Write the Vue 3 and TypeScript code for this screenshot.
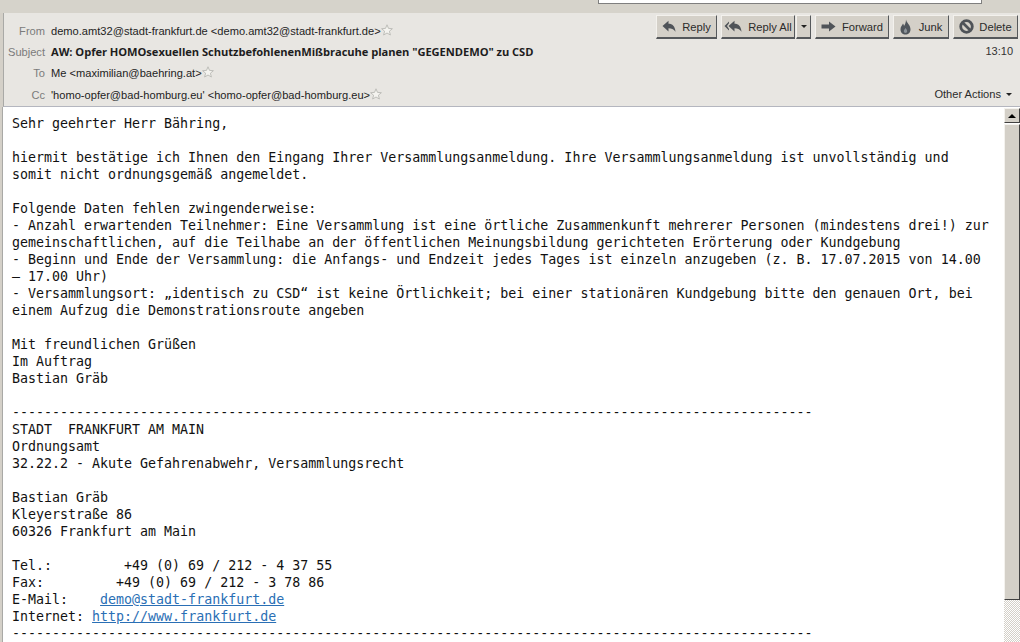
<script setup lang="ts">
interface Field { label: string; text: string; bold?: boolean; star?: boolean }
const fields: Field[] = [
  { label: 'From', text: 'demo.amt32@stadt-frankfurt.de <demo.amt32@stadt-frankfurt.de>', star: true },
  { label: 'Subject', text: 'AW: Opfer HOMOsexuellen SchutzbefohlenenMißbracuhe planen "GEGENDEMO" zu CSD', bold: true },
  { label: 'To', text: 'Me <maximilian@baehring.at>', star: true },
  { label: 'Cc', text: "'homo-opfer@bad-homburg.eu' <homo-opfer@bad-homburg.eu>", star: true }
]
const lines = [
  'Sehr geehrter Herr Bähring,',
  '',
  'hiermit bestätige ich Ihnen den Eingang Ihrer Versammlungsanmeldung. Ihre Versammlungsanmeldung ist unvollständig und',
  'somit nicht ordnungsgemäß angemeldet.',
  '',
  'Folgende Daten fehlen zwingenderweise:',
  '- Anzahl erwartenden Teilnehmer: Eine Versammlung ist eine örtliche Zusammenkunft mehrerer Personen (mindestens drei!) zur',
  'gemeinschaftlichen, auf die Teilhabe an der öffentlichen Meinungsbildung gerichteten Erörterung oder Kundgebung',
  '- Beginn und Ende der Versammlung: die Anfangs- und Endzeit jedes Tages ist einzeln anzugeben (z. B. 17.07.2015 von 14.00',
  '– 17.00 Uhr)',
  '- Versammlungsort: „identisch zu CSD“ ist keine Örtlichkeit; bei einer stationären Kundgebung bitte den genauen Ort, bei',
  'einem Aufzug die Demonstrationsroute angeben',
  '',
  'Mit freundlichen Grüßen',
  'Im Auftrag',
  'Bastian Gräb',
  '',
  '-'.repeat(100),
  'STADT  FRANKFURT AM MAIN',
  'Ordnungsamt',
  '32.22.2 - Akute Gefahrenabwehr, Versammlungsrecht',
  '',
  'Bastian Gräb',
  'Kleyerstraße 86',
  '60326 Frankfurt am Main',
  '',
  'Tel.:         +49 (0) 69 / 212 - 4 37 55',
  'Fax:         +49 (0) 69 / 212 - 3 78 86'
]
const mailPrefix = 'E-Mail:    '
const webPrefix = 'Internet: '
</script>

<template>
  <div class="window">
    <div class="topstrip"><div class="search"></div></div>
    <header class="head">
      <div class="fields">
        <div v-for="f in fields" :key="f.label" class="field">
          <span class="label">{{ f.label }}</span>
          <span :class="['value', { bold: f.bold }]">{{ f.text }}</span>
          <svg v-if="f.star" class="star" width="12" height="12" viewBox="0 0 12 12">
            <path d="M6 .8 7.5 4.4 11.4 4.7 8.4 7.2 9.4 11 6 9 2.6 11 3.6 7.2.6 4.7 4.5 4.4Z" fill="#f4f3ef" stroke="#b9b9b4" stroke-width=".9" />
          </svg>
        </div>
      </div>
      <div class="side">
        <div class="buttons">
          <button class="btn reply">
            <svg width="14" height="13" viewBox="0 0 14 13"><path d="M.5 6 6.500 .8V3.800c4 0 6.500 2.500 7 8C11.500 9 9.500 8.200 6.500 8.200V11.500Z" fill="#4f5358" /></svg>
            <span>Reply</span>
          </button>
          <div class="split">
            <button class="btn replyall">
              <svg width="18" height="13" viewBox="0 0 18 13"><path d="M.5 6 5 1.500V3.200L3 6 5 9V10.500Z" fill="#4f5358" /><path d="M4.500 6 10.500 .8V3.800c4 0 6.500 2.500 7 8C15.500 9 13.500 8.200 10.500 8.200V11.500Z" fill="#4f5358" /></svg>
              <span>Reply All</span>
            </button>
            <button class="btn drop"><span class="caret"></span></button>
          </div>
          <button class="btn forward">
            <svg width="15" height="11" viewBox="0 0 15 11"><path d="M.5 3.500H8V.5L14.500 5.500 8 10.500V7.500H.5Z" fill="#4f5358" /></svg>
            <span>Forward</span>
          </button>
          <button class="btn junk">
            <svg width="11" height="16" viewBox="0 0 11 16"><path d="M6 .5C6.300 3.500 10.500 6 10.500 10.200 10.500 13.500 8.300 15.500 5.500 15.500S.5 13.500.5 10.200C.5 7.800 2 6.500 3 4.500 3.600 5.200 4 6 4 7 5 5.500 6 3.500 6 .5Z" fill="#50565c" /><path d="M5.500 9c.8 1.200 1.700 2 1.700 3.300A1.700 1.700 0 0 1 3.800 12.300C3.800 11 5 10.200 5.500 9Z" fill="#8b9298" /></svg>
            <span>Junk</span>
          </button>
          <button class="btn delete">
            <svg width="15" height="15" viewBox="0 0 15 15"><circle cx="7.500" cy="7.500" r="5.800" fill="none" stroke="#4f5358" stroke-width="2.800" /><path d="M3.500 3.500 11.500 11.500" stroke="#4f5358" stroke-width="2.600" /></svg>
            <span>Delete</span>
          </button>
        </div>
        <div class="time">13:10</div>
        <div class="other">Other Actions<span class="caret other-caret"></span></div>
      </div>
    </header>
    <main class="content">
      <div class="message">
        <div v-for="(l, i) in lines" :key="i" class="line">{{ l }}</div>
        <div class="line">{{ mailPrefix }}<a class="link">demo@stadt-frankfurt.de</a></div>
        <div class="line">{{ webPrefix }}<a class="link">http://www.frankfurt.de</a></div>
        <div class="line">{{ '-'.repeat(100) }}</div>
      </div>
      <div class="scrollbar">
        <div class="arrow"><span class="up"></span></div>
        <div class="thumb"></div>
        <div class="track"></div>
      </div>
    </main>
  </div>
</template>

<style>
html, body { margin: 0; padding: 0; overflow: hidden; }
</style>

<style scoped>
.window {
  width: 1020px;
  height: 642px;
  overflow: hidden;
  display: flex;
  flex-direction: column;
  box-sizing: border-box;
  background: #d4d0c8;
  padding-left: 3px;
  font-family: "Liberation Sans", Arial, sans-serif;
}
.topstrip {
  height: 13px;
  flex: none;
  margin-left: -3px;
  background: #d6d3cb;
  padding-left: 598px;
}
.search {
  width: 382px;
  height: 3px;
  background: #fff;
  border: 1px solid #7f7f7f;
  border-top: 0;
}
.head {
  height: 94px;
  flex: none;
  box-sizing: border-box;
  display: flex;
  justify-content: space-between;
  background: #e8e6e2;
  border-left: 1px solid #a9a9a6;
  border-bottom: 1px solid #b4b6bf;
}
.fields { padding-top: 7px; }
.field {
  height: 21.300px;
  display: flex;
  align-items: center;
  font-size: 11.100px;
  color: #1d1d1d;
  white-space: pre;
}
.label {
  width: 41px;
  margin-right: 6px;
  text-align: right;
  color: #7b7b7b;
  flex: none;
}
.bold {
  font-family: "Open Sans", sans-serif;
  font-weight: 700;
  font-size: 11.150px;
  letter-spacing: -.05px;
}
.star { margin-top: -2px; flex: none; }
.side {
  width: 367px;
  flex: none;
  display: flex;
  flex-direction: column;
  align-items: flex-end;
  padding-right: 2px;
  box-sizing: border-box;
}
.buttons { display: flex; gap: 4px; margin-top: 2px; }
.split { display: flex; gap: 1px; }
.btn {
  height: 24px;
  margin: 0;
  padding: 0;
  box-sizing: border-box;
  display: flex;
  align-items: center;
  justify-content: center;
  gap: 6px;
  background: #d4d0c8;
  color: #2b2b2b;
  font: inherit;
  font-size: 11.200px;
  white-space: nowrap;
  border: 1px solid;
  border-color: #f3f1ed #55585b #55585b #f3f1ed;
  border-bottom-width: 2px;
}
.reply { width: 61px; }
.replyall { width: 74px; }
.drop { width: 15px; }
.forward { width: 74px; }
.junk { width: 56px; gap: 8px; }
.delete { width: 65px; gap: 5px; }
.caret {
  width: 0;
  height: 0;
  border: 3px solid transparent;
  border-top: 3px solid #222;
  border-bottom: 0;
}
.time {
  font-size: 11px;
  color: #333;
  margin-top: 6px;
  margin-right: 5px;
  height: 17px;
}
.other {
  margin-top: 26px;
  margin-right: 6px;
  font-size: 11.100px;
  color: #2b2b2b;
  display: flex;
  align-items: center;
}
.other-caret { margin-left: 5px; }
.content {
  flex: 1;
  min-height: 0;
  display: flex;
  background: #fff;
  border-left: 1px solid #a9a9a6;
  margin-left: -1px;
}
.message {
  flex: 1;
  min-width: 0;
  padding: 8px 0 0 9px;
  font-family: "DejaVu Sans Mono", "Liberation Mono", monospace;
  font-size: 13.300px;
  line-height: 17px;
  color: #111;
  white-space: pre;
  overflow: hidden;
}
.line { height: 17px; }
.link { color: #2a6fb5; text-decoration: underline; }
.scrollbar {
  width: 16px;
  flex: none;
  display: flex;
  flex-direction: column;
  gap: 1px;
  padding-top: 1px;
  box-sizing: border-box;
}
.arrow, .thumb {
  box-sizing: border-box;
  flex: none;
  background: #d4d0c8;
  border: 1px solid;
  border-color: #f4f2ee #404040 #404040 #f4f2ee;
}
.arrow {
  height: 15px;
  display: flex;
  align-items: center;
  justify-content: center;
}
.up {
  width: 0;
  height: 0;
  border: 4px solid transparent;
  border-bottom: 4px solid #000;
  border-top: 0;
}
.thumb { height: 476px; }
.track {
  flex: 1;
  margin-top: -1px;
  background-color: #fff;
  background-image: repeating-conic-gradient(#d4d0c8 0 25%, #fff 0 50%);
  background-size: 2px 2px;
}
</style>
